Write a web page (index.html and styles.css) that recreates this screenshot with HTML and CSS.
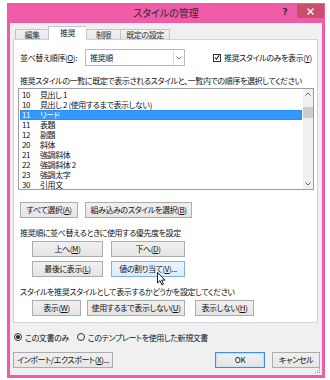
FILE: index.html
```html
<!DOCTYPE html>
<html lang="ja">
<head>
    <meta charset="UTF-8">
    <title>スタイルの管理</title>
    <link rel="stylesheet" href="styles.css">
</head>
<body>
    <div class="window">
        <div class="titlebar">
            <span class="title">スタイルの管理</span>
            <div class="caption-buttons">
                <span class="help">?</span>
                <span class="close">
                    <svg width="7" height="7" viewBox="0 0 7 7"><path d="M0.5 0.5L6.5 6.5M6.5 0.5L0.5 6.5" stroke="#fff" stroke-width="1.4"/></svg>
                </span>
            </div>
        </div>

        <div class="dialog">
            <div class="tabs">
                <div class="tab tab-edit">編集</div>
                <div class="tab active">推奨</div>
                <div class="tab tab-limit">制限</div>
                <div class="tab tab-default">既定の設定</div>
            </div>

            <div class="panel">
                <div class="sort-row">
                    <span class="sort-label">並べ替え順序(<u>O</u>):</span>
                    <div class="combo">
                        <span class="combo-text">推奨順</span>
                        <span class="combo-drop">
                            <svg width="6" height="4" viewBox="0 0 6 4"><path d="M0.5 0.5L3 3L5.5 0.5" fill="none" stroke="#777" stroke-width="1"/></svg>
                        </span>
                    </div>
                    <label class="check">
                        <span class="check-box">
                            <svg width="7" height="7" viewBox="0 0 7 7"><path d="M1 3.5L2.8 5.5L6 1" fill="none" stroke="#222" stroke-width="1.3"/></svg>
                        </span>
                        <span>推奨スタイルのみを表示(<u>Y</u>)</span>
                    </label>
                </div>

                <div class="caption">推奨スタイルの一覧に既定で表示されるスタイルと、一覧内での順序を選択してください</div>

                <div class="listbox">
                    <ul class="items">
                        <li><span class="num">10</span>見出し 1</li>
                        <li><span class="num">10</span>見出し 2 (使用するまで表示しない)</li>
                        <li class="selected"><span class="num">11</span>リード</li>
                        <li><span class="num">11</span>表題</li>
                        <li><span class="num">12</span>副題</li>
                        <li><span class="num">20</span>斜体</li>
                        <li><span class="num">21</span>強調斜体</li>
                        <li><span class="num">22</span>強調斜体 2</li>
                        <li><span class="num">23</span>強調太字</li>
                        <li><span class="num">30</span>引用文</li>
                    </ul>
                    <div class="scrollbar">
                        <span class="arrow">
                            <svg width="6" height="4" viewBox="0 0 6 4"><path d="M0.5 3.5L3 1L5.5 3.5" fill="none" stroke="#606060" stroke-width="1"/></svg>
                        </span>
                        <span class="thumb"></span>
                        <span class="arrow arrow-down">
                            <svg width="6" height="4" viewBox="0 0 6 4"><path d="M0.5 0.5L3 3L5.5 0.5" fill="none" stroke="#606060" stroke-width="1"/></svg>
                        </span>
                    </div>
                </div>

                <div class="button-row">
                    <button class="btn btn-all">すべて選択(<u>A</u>)</button>
                    <button class="btn btn-builtin">組み込みのスタイルを選択(<u>B</u>)</button>
                </div>

                <div class="caption">推奨順に並べ替えるときに使用する優先度を設定</div>

                <div class="button-grid">
                    <button class="btn">上へ(<u>M</u>)</button>
                    <button class="btn">下へ(<u>D</u>)</button>
                    <button class="btn">最後に表示(<u>L</u>)</button>
                    <button class="btn hover">値の割り当て(<u>V</u>)...</button>
                </div>

                <div class="caption">スタイルを推奨スタイルとして表示するかどうかを設定してください</div>

                <div class="button-row indent">
                    <button class="btn btn-show">表示(<u>W</u>)</button>
                    <button class="btn btn-until">使用するまで表示しない(<u>U</u>)</button>
                    <button class="btn btn-hide">表示しない(<u>H</u>)</button>
                </div>
            </div>

            <div class="radio-row">
                <label class="radio"><span class="radio-dot checked"></span>この文書のみ</label>
                <label class="radio"><span class="radio-dot"></span>このテンプレートを使用した新規文書</label>
            </div>

            <div class="footer">
                <button class="btn btn-import">インポート/エクスポート(<u>X</u>)...</button>
                <button class="btn btn-ok default">OK</button>
                <button class="btn btn-cancel">キャンセル</button>
            </div>

            <svg class="grip" width="6" height="6" viewBox="0 0 6 6">
                <rect x="4" y="0" width="1" height="1" fill="#999"/>
                <rect x="2" y="2" width="1" height="1" fill="#999"/>
                <rect x="4" y="2" width="1" height="1" fill="#999"/>
                <rect x="0" y="4" width="1" height="1" fill="#999"/>
                <rect x="2" y="4" width="1" height="1" fill="#999"/>
                <rect x="4" y="4" width="1" height="1" fill="#999"/>
            </svg>
        </div>
    </div>

    <!-- mouse pointer resting on the hovered button -->
    <svg class="pointer" width="9" height="14" viewBox="0 0 9 14">
        <path d="M0.5 0.5L0.5 11L3 8.6L4.8 12.8L6.4 12.1L4.7 8.1L8 8.1Z" fill="#fff" stroke="#000" stroke-width="0.9" stroke-linejoin="round"/>
    </svg>
</body>
</html>
```

FILE: styles.css
```css
:root {
    --accent: #f05ba8;
    --close-red: #c9506c;
    --dialog-bg: #f0f0f0;
    --border: #acacac;
    --text: #111;
}

* {
    box-sizing: border-box;
}

body {
    margin: 0;
    background-color: #fff;
    font-family: "Noto Sans CJK JP", "Noto Sans", sans-serif;
    font-size: 8px;
    letter-spacing: -0.4px;
    font-feature-settings: "palt";
    color: var(--text);
    position: relative;
}

u {
    text-decoration-thickness: 1px;
    text-underline-offset: 1px;
}

.window {
    margin: 3px 0 0 7px;
    width: 318px;
    height: 375px;
    background-color: var(--accent);
    padding: 0 3px 3px;
    display: flex;
    flex-direction: column;
}

/* title bar */
.titlebar {
    height: 20px;
    display: grid;
    grid-template-columns: 1fr auto 1fr;
}

.title {
    grid-column: 2;
    font-size: 10px;
    letter-spacing: 0;
    line-height: 19px;
    color: #2a2a2a;
}

.caption-buttons {
    grid-column: 3;
    justify-self: end;
    display: flex;
    align-items: flex-start;
    margin-right: -2px;
}

.help {
    width: 24px;
    text-align: center;
    font-family: "DejaVu Sans", sans-serif;
    font-weight: bold;
    font-size: 9px;
    line-height: 18px;
    color: #333;
}

.close {
    width: 27px;
    height: 14px;
    margin-top: 1px;
    background-color: var(--close-red);
    display: flex;
    align-items: center;
    justify-content: center;
}

/* dialog body */
.dialog {
    flex: 1;
    background-color: var(--dialog-bg);
    padding: 3px 4px 0 3px;
    display: flex;
    flex-direction: column;
    position: relative;
}

.tabs {
    display: flex;
    align-items: flex-end;
    height: 13px;
    padding-left: 2px;
    position: relative;
    z-index: 1;
}

.tab {
    height: 10px;
    line-height: 9px;
    text-align: center;
    border: 1px solid #c4c4c4;
    border-bottom: none;
    border-right: none;
    background: linear-gradient(#f2f2f2, #e6e6e6);
    color: #333;
}

.tab-edit {
    width: 33px;
}

.tab-limit {
    width: 34px;
}

.tab-default {
    width: 50px;
    border-right: 1px solid #c4c4c4;
}

.tab.active {
    width: 38px;
    height: 14px;
    line-height: 12px;
    margin-bottom: -1px;
    background: #fff;
    border-right: none;
    color: var(--text);
}

.panel {
    width: 305px;
    height: 284px;
    background-color: #fff;
    border: 1px solid #d4d4d4;
    padding: 9px 0 0 6px;
}

.sort-row {
    display: flex;
    align-items: center;
    height: 17px;
}

.sort-label {
    width: 65px;
    white-space: nowrap;
}

.combo {
    width: 100px;
    height: 17px;
    border: 1px solid #b9b9b9;
    background-color: #fff;
    display: flex;
}

.combo-text {
    flex: 1;
    line-height: 15px;
    padding-left: 4px;
}

.combo-drop {
    width: 11px;
    border-left: 1px solid #dadada;
    display: flex;
    align-items: center;
    justify-content: center;
}

.check {
    margin-left: 28px;
    display: flex;
    align-items: center;
    gap: 3px;
    white-space: nowrap;
}

.check-box {
    width: 8px;
    height: 8px;
    border: 1px solid #333;
    display: flex;
    align-items: center;
    justify-content: center;
}

.caption {
    margin-top: 8px;
    line-height: 14px;
    white-space: nowrap;
}

/* style list */
.listbox {
    margin-left: -2px;
    width: 296px;
    height: 102px;
    border: 1px solid #9a9da3;
    display: flex;
}

.items {
    flex: 1;
    list-style: none;
    margin: 0;
    padding: 1px 1px 0 1px;
    overflow: hidden;
}

.items li {
    height: 10px;
    line-height: 10px;
    padding-left: 2px;
    white-space: nowrap;
}

.items .num {
    display: inline-block;
    width: 18px;
}

.items li.selected {
    background-color: #3399ff;
    color: #fff;
    outline: 1px dotted #b0641c;
    outline-offset: -1px;
}

.scrollbar {
    width: 10px;
    background-color: #f0f0f0;
    display: flex;
    flex-direction: column;
}

.arrow {
    height: 10px;
    display: flex;
    align-items: center;
    justify-content: center;
}

.thumb {
    height: 11px;
    margin-top: 8px;
    background-color: #cdcdcd;
}

.arrow-down {
    margin-top: auto;
}

/* buttons */
.btn {
    height: 16px;
    padding: 0 2px;
    border: 1px solid var(--border);
    background: linear-gradient(#f0f0f0, #e5e5e5);
    font-family: inherit;
    font-size: 8px;
    letter-spacing: -0.4px;
    font-feature-settings: "palt";
    color: var(--text);
    line-height: 14px;
    white-space: nowrap;
}

.btn.hover {
    border-color: #7eb4ea;
    background: linear-gradient(#ecf4fc, #dcecfc);
}

.btn.default {
    border-color: #3c8ee6;
    box-shadow: inset 0 0 0 1px #c5def5;
}

.button-row {
    display: flex;
    gap: 7px;
    margin-top: 12px;
}

.btn-all {
    width: 58px;
}

.btn-builtin {
    width: 107px;
}

.button-grid {
    display: grid;
    grid-template-columns: 71px 74px;
    column-gap: 8px;
    row-gap: 4px;
    margin: 1px 0 0 12px;
}

.button-grid .btn {
    width: 100%;
}

.button-row.indent {
    margin: 1px 0 0 12px;
    gap: 6px;
}

.btn-show {
    width: 49px;
}

.btn-until {
    width: 98px;
    margin-right: 4px;
}

.btn-hide {
    width: 59px;
}

/* bottom of dialog */
.radio-row {
    display: flex;
    align-items: center;
    height: 12px;
    margin-top: 8px;
    padding-left: 1px;
    gap: 8px;
}

.radio {
    display: flex;
    align-items: center;
    gap: 3px;
}

.radio-dot {
    width: 8px;
    height: 8px;
    border: 1px solid #333;
    border-radius: 50%;
    display: flex;
    align-items: center;
    justify-content: center;
}

.radio-dot.checked::after {
    content: "";
    width: 4px;
    height: 4px;
    border-radius: 50%;
    background-color: #222;
}

.footer {
    display: flex;
    margin-top: 9px;
    gap: 7px;
}

.btn-import {
    width: 100px;
    margin-right: auto;
}

.btn-ok {
    width: 50px;
}

.btn-cancel {
    width: 48px;
    margin-right: -2px;
}

.grip {
    position: absolute;
    right: 1px;
    bottom: 1px;
}

.pointer {
    position: absolute;
    left: 157px;
    top: 272px;
}
```
